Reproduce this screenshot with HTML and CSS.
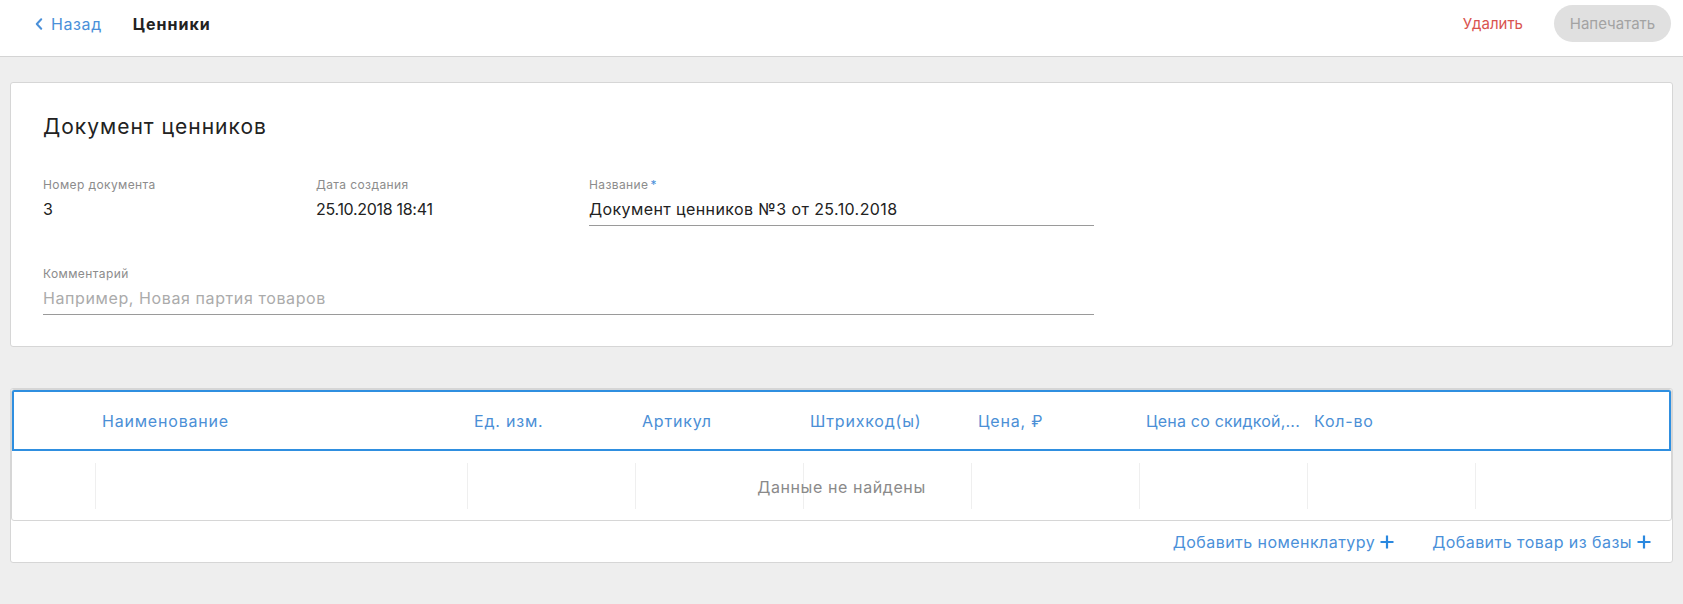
FILE: index.html
```html
<!DOCTYPE html>
<html lang="ru">
<head>
<meta charset="utf-8">
<title>Ценники</title>
<link rel="stylesheet" href="styles.css">
</head>
<body>
<header class="topbar">
  <a class="back" href="#">
    <svg class="back-icon" width="8" height="12" viewBox="0 0 8 12"><path d="M6.2 1.2 L1.8 6 L6.2 10.8" fill="none" stroke="currentColor" stroke-width="2" stroke-linecap="round" stroke-linejoin="round"/></svg>
    <span>Назад</span>
  </a>
  <h1 class="page-title">Ценники</h1>
  <div class="topbar-actions">
    <button class="btn-delete" type="button">Удалить</button>
    <button class="btn-print" type="button" disabled>Напечатать</button>
  </div>
</header>
<main class="content">
  <section class="card doc-card">
    <h2 class="doc-title">Документ ценников</h2>
    <div class="fields">
      <div class="field">
        <div class="field-label">Номер документа</div>
        <div class="field-value">3</div>
      </div>
      <div class="field">
        <div class="field-label">Дата создания</div>
        <div class="field-value digits">25.10.2018 18:41</div>
      </div>
      <div class="field field-input">
        <div class="field-label">Название<span class="req">*</span></div>
        <div class="field-value">Документ ценников №3 от 25.10.2018</div>
      </div>
      <div class="field field-input field-wide">
        <div class="field-label">Комментарий</div>
        <div class="field-value placeholder">Например, Новая партия товаров</div>
      </div>
    </div>
  </section>
  <section class="card table-card">
    <div class="table">
      <div class="table-head">
        <div class="th"></div>
        <div class="th">Наименование</div>
        <div class="th">Ед. изм.</div>
        <div class="th">Артикул</div>
        <div class="th">Штрихкод(ы)</div>
        <div class="th">Цена, ₽</div>
        <div class="th th-long">Цена со скидкой,...</div>
        <div class="th">Кол-во</div>
        <div class="th"></div>
      </div>
      <div class="table-body">
        <div class="td c1"></div>
        <div class="td c2"></div>
        <div class="td c3"></div>
        <div class="td c4"></div>
        <div class="td c5"></div>
        <div class="td c6"></div>
        <div class="td c7"></div>
        <div class="td c8"></div>
        <div class="td c9"></div>
        <div class="empty">Данные не найдены</div>
      </div>
    </div>
    <div class="table-footer">
      <a class="add-link" href="#">Добавить номенклатуру<svg class="plus" width="14" height="14" viewBox="0 0 14 14"><path d="M7 0.5 V13.5 M0.5 7 H13.5" stroke="currentColor" stroke-width="2.2"/></svg></a>
      <a class="add-link" href="#">Добавить товар из базы<svg class="plus" width="14" height="14" viewBox="0 0 14 14"><path d="M7 0.5 V13.5 M0.5 7 H13.5" stroke="currentColor" stroke-width="2.2"/></svg></a>
    </div>
  </section>
</main>
</body>
</html>
```
FILE: styles.css
```css
* { box-sizing: border-box; }

html, body {
  margin: 0;
  padding: 0;
}

body {
  background: #eeeeee;
  font-family: Inter, "Noto Sans", "DejaVu Sans", sans-serif;
  color: #222222;
  font-size: 16px;
}

a { text-decoration: none; }

.topbar {
  height: 57px;
  padding: 0 12px 9px 35px;
  background: #ffffff;
  border-bottom: 1px solid #d4d4d4;
  display: flex;
  align-items: center;
}

.back {
  display: flex;
  align-items: center;
  gap: 8px;
  color: #4a90d9;
  font-size: 16px;
  line-height: 20px;
  letter-spacing: 0.6px;
}

.back-icon { display: block; }

.page-title {
  margin: 0 0 0 31px;
  font-size: 16px;
  line-height: 20px;
  font-weight: 700;
  letter-spacing: 1px;
  color: #222222;
}

.topbar-actions {
  margin-left: auto;
  display: flex;
  align-items: center;
  gap: 31px;
}

.btn-delete {
  background: none;
  border: 0;
  padding: 0;
  font: inherit;
  font-size: 15px;
  color: #d9534f;
}

.btn-print {
  width: 117px;
  height: 37px;
  border: 0;
  border-radius: 19px;
  background: #e0e0e0;
  color: #a3a3a3;
  font: inherit;
  font-size: 15px;
  padding: 0;
}

.content {
  padding: 25px 10px;
  display: flex;
  flex-direction: column;
  gap: 41px;
}

.card {
  background: #ffffff;
  border: 1px solid #d6d6d6;
  border-radius: 3px;
}

.doc-card {
  padding: 32px 32px 31px;
}

.doc-title {
  margin: 0 0 38px;
  font-size: 21px;
  line-height: 24px;
  font-weight: 400;
  letter-spacing: 1px;
  color: #222222;
}

.fields {
  display: grid;
  grid-template-columns: 273px 273px 505px;
  row-gap: 40px;
  align-items: start;
}

.field-wide { grid-column: 1 / 4; }

.field-label {
  font-size: 12px;
  line-height: 16px;
  letter-spacing: 0.4px;
  color: #8c8c8c;
}

.req {
  color: #4a90d9;
  margin-left: 2px;
}

.field-value {
  margin-top: 5px;
  font-size: 16px;
  line-height: 22px;
  letter-spacing: 0.4px;
  color: #222222;
}

.field-value.digits { letter-spacing: -0.3px; }

.field-input .field-value {
  padding-bottom: 5px;
  border-bottom: 1px solid #9a9a9a;
}

.field-value.placeholder {
  color: #ababab;
  letter-spacing: 0.6px;
}

.table {
  border: 1px solid #d6d6d6;
  border-radius: 3px;
  overflow: hidden;
}

.table-head {
  height: 61px;
  border: 2px solid #2f8fe0;
  display: grid;
  grid-template-columns: 81px 372px repeat(6, 168px) 1fr;
  align-items: center;
}

.th {
  padding: 0 5px 0 7px;
  color: #4b8fd6;
  font-size: 16px;
  line-height: 20px;
  letter-spacing: 0.8px;
  white-space: nowrap;
}

.th-long {
  padding-right: 0;
  letter-spacing: 0.2px;
}

.table-body {
  height: 69px;
  display: grid;
  grid-template-columns: 83px 372px repeat(6, 168px) 1fr;
  grid-template-rows: 1fr;
}

.td {
  grid-row: 1;
  margin: 12px 0 11px;
}

.c1 { grid-column: 1; }
.c2 { grid-column: 2; }
.c3 { grid-column: 3; }
.c4 { grid-column: 4; }
.c5 { grid-column: 5; }
.c6 { grid-column: 6; }
.c7 { grid-column: 7; }
.c8 { grid-column: 8; }
.c9 { grid-column: 9; }

.td + .td { border-left: 1px solid #efefef; }

.empty {
  grid-row: 1;
  grid-column: 1 / -1;
  align-self: center;
  justify-self: center;
  color: #8a8a8a;
  font-size: 16px;
  line-height: 20px;
  letter-spacing: 0.6px;
  margin-top: 3px;
}

.table-footer {
  height: 41px;
  padding-right: 21px;
  display: flex;
  justify-content: flex-end;
  align-items: center;
  gap: 38px;
}

.add-link {
  display: flex;
  align-items: center;
  gap: 5px;
  color: #4a90d9;
  font-size: 16px;
  line-height: 20px;
  letter-spacing: 0.45px;
}

.plus {
  display: block;
  color: #2a88df;
}
```
